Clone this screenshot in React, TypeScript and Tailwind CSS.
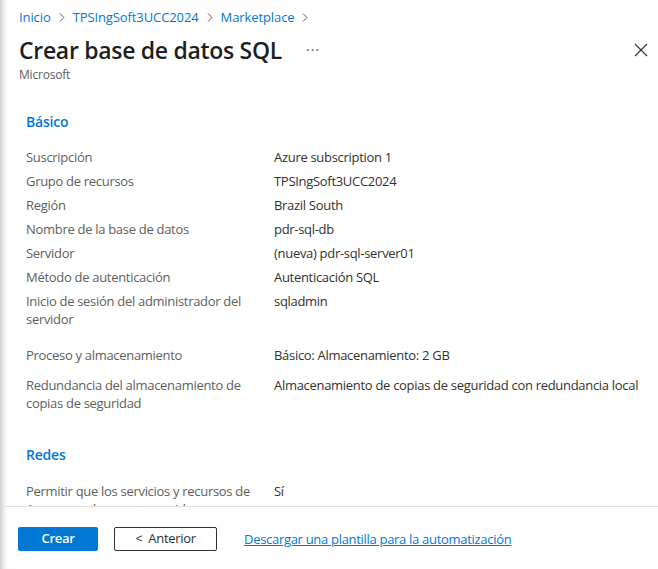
import React from "react";

const font = { fontFamily: '"Open Sans", "Noto Sans", sans-serif' };

function Row({ label, value, className = "" }: { label: string; value: string; className?: string }) {
  return (
    <div className={"flex text-[13px] leading-[18px] tracking-[-0.3px] " + className}>
      <div className="w-[248px] shrink-0 pr-[14px] text-[#605e5c]">{label}</div>
      <div className="text-[#323130]">{value}</div>
    </div>
  );
}

function Chevron() {
  return (
    <svg width="6" height="9" viewBox="0 0 6 9" className="mx-[8px]">
      <path d="M1 0.5 L5 4.5 L1 8.5" fill="none" stroke="#605e5c" strokeWidth="1" />
    </svg>
  );
}

export default function App() {
  return (
    <div
      className="relative flex h-[569px] w-[658px] flex-col overflow-hidden bg-white shadow-[inset_7px_0_6px_-5px_rgba(0,0,0,0.25)]"
      style={font}
    >
      <div className="pl-[19px] pr-[8px] pt-[8px]">
        <div className="flex items-center text-[13px] leading-[18px] tracking-[-0.1px] text-[#0078d4]">
          <span>Inicio</span>
          <Chevron />
          <span>TPSIngSoft3UCC2024</span>
          <Chevron />
          <span>Marketplace</span>
          <Chevron />
        </div>
        <div className="mt-[8px] flex items-center">
          <h1 className="text-[23px] font-semibold leading-[32px] tracking-[-0.3px] text-[#201f1e]">
            Crear base de datos SQL
          </h1>
          <span className="ml-[24px] text-[14px] leading-none text-[#605e5c] tracking-[1px]">···</span>
          <div className="flex-1" />
          <svg width="14" height="14" viewBox="0 0 14 14" className="mr-[2px]">
            <path d="M1 1 L13 13 M13 1 L1 13" stroke="#323130" strokeWidth="1.1" />
          </svg>
        </div>
        <div className="mt-[1px] text-[12px] leading-[16px] tracking-[-0.2px] text-[#605e5c]">Microsoft</div>
      </div>

      <div className="flex-1 overflow-hidden pl-[26px] pt-[29px]">
        <div className="text-[14px] font-semibold leading-[20px] tracking-[-0.2px] text-[#0078d4]">Básico</div>
        <Row className="mt-[16px]" label="Suscripción" value="Azure subscription 1" />
        <Row className="mt-[6px]" label="Grupo de recursos" value="TPSIngSoft3UCC2024" />
        <Row className="mt-[6px]" label="Región" value="Brazil South" />
        <Row className="mt-[6px]" label="Nombre de la base de datos" value="pdr-sql-db" />
        <Row className="mt-[6px]" label="Servidor" value="(nueva) pdr-sql-server01" />
        <Row className="mt-[6px]" label="Método de autenticación" value="Autenticación SQL" />
        <Row className="mt-[6px]" label="Inicio de sesión del administrador del servidor" value="sqladmin" />
        <Row className="mt-[18px]" label="Proceso y almacenamiento" value="Básico: Almacenamiento: 2 GB" />
        <Row
          className="mt-[12px]"
          label="Redundancia del almacenamiento de copias de seguridad"
          value="Almacenamiento de copias de seguridad con redundancia local"
        />
        <div className="mt-[33px] text-[14px] font-semibold leading-[20px] tracking-[-0.2px] text-[#0078d4]">
          Redes
        </div>
        <Row
          className="mt-[17px]"
          label="Permitir que los servicios y recursos de Azure accedan a este servidor"
          value="Sí"
        />
      </div>

      <div className="flex h-[63px] shrink-0 items-start gap-[16px] border-t border-[#e1dfdd] pl-[18px] pt-[20px] text-[13px] tracking-[-0.3px]">
        <button className="h-[24px] w-[80px] rounded-[2px] bg-[#0078d4] font-semibold text-white">Crear</button>
        <button className="flex h-[24px] w-[103px] items-center justify-center rounded-[2px] border border-[#323130] text-[#323130]">
          <span className="mr-[6px]">&lt;</span>
          <span>Anterior</span>
        </button>
        <a className="ml-[11px] leading-[24px] text-[#0078d4] underline">Descargar una plantilla para la automatización</a>
      </div>
    </div>
  );
}
